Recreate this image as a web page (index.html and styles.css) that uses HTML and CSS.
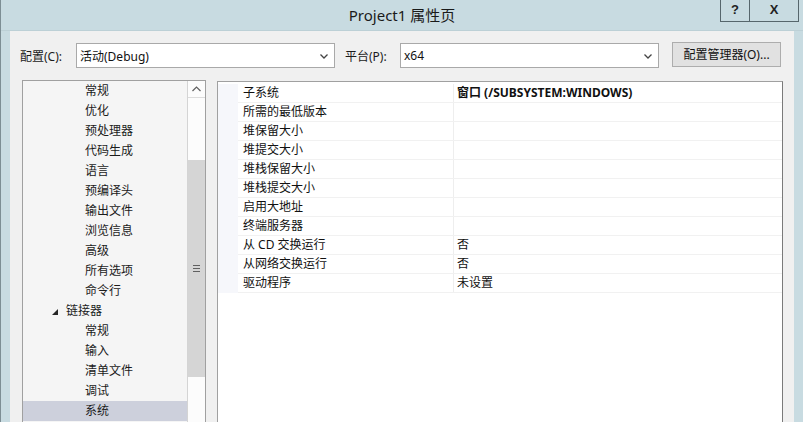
FILE: index.html
```html
<!doctype html>
<html>
<head>
  <meta charset="utf-8" />
  <title>Project1 属性页</title>
  <link rel="stylesheet" href="styles.css">
</head>
<body>
  <div class="window">
    <div class="titlebar">
      <div></div>
      <div class="title">Project1 属性页</div>
      <div class="caption-buttons">
        <span class="cap-btn help">?</span>
        <span class="cap-btn close">X</span>
      </div>
    </div>

    <div class="client">
      <div class="toolbar">
        <span class="field-label">配置(C):</span>
        <div class="combo">
          <span>活动(Debug)</span>
          <svg class="combo-arrow" width="8" height="5" viewBox="0 0 8 5"><polyline points="0.5,0.5 4,4 7.5,0.5" fill="none" stroke="#444" stroke-width="1.3"/></svg>
        </div>
        <span class="field-label platform">平台(P):</span>
        <div class="combo">
          <span>x64</span>
          <svg class="combo-arrow" width="8" height="5" viewBox="0 0 8 5"><polyline points="0.5,0.5 4,4 7.5,0.5" fill="none" stroke="#444" stroke-width="1.3"/></svg>
        </div>
        <button class="btn">配置管理器(O)...</button>
      </div>

      <div class="panes">
        <div class="tree">
          <ul class="tree-list">
            <li class="child">常规</li>
            <li class="child">优化</li>
            <li class="child">预处理器</li>
            <li class="child">代码生成</li>
            <li class="child">语言</li>
            <li class="child">预编译头</li>
            <li class="child">输出文件</li>
            <li class="child">浏览信息</li>
            <li class="child">高级</li>
            <li class="child">所有选项</li>
            <li class="child">命令行</li>
            <li class="parent"><span class="expander"></span>链接器</li>
            <li class="child">常规</li>
            <li class="child">输入</li>
            <li class="child">清单文件</li>
            <li class="child">调试</li>
            <li class="child selected">系统</li>
          </ul>
          <div class="vscroll">
            <div class="scroll-up">
              <svg width="9" height="6" viewBox="0 0 9 6"><polyline points="0.5,5 4.5,1 8.5,5" fill="none" stroke="#606060" stroke-width="1.2"/></svg>
            </div>
            <div class="scroll-track top"></div>
            <div class="scroll-thumb">
              <svg width="7" height="7" viewBox="0 0 7 7"><path d="M0 0.5h7M0 3.5h7M0 6.5h7" stroke="#606060" stroke-width="1"/></svg>
            </div>
            <div class="scroll-track"></div>
          </div>
        </div>

        <div class="grid">
          <table class="props">
            <tr><td class="gutter"></td><td class="name">子系统</td><td class="value bold">窗口 (/SUBSYSTEM:WINDOWS)</td></tr>
            <tr><td class="gutter"></td><td class="name">所需的最低版本</td><td class="value"></td></tr>
            <tr><td class="gutter"></td><td class="name">堆保留大小</td><td class="value"></td></tr>
            <tr><td class="gutter"></td><td class="name">堆提交大小</td><td class="value"></td></tr>
            <tr><td class="gutter"></td><td class="name">堆栈保留大小</td><td class="value"></td></tr>
            <tr><td class="gutter"></td><td class="name">堆栈提交大小</td><td class="value"></td></tr>
            <tr><td class="gutter"></td><td class="name">启用大地址</td><td class="value"></td></tr>
            <tr><td class="gutter"></td><td class="name">终端服务器</td><td class="value"></td></tr>
            <tr><td class="gutter"></td><td class="name">从 CD 交换运行</td><td class="value">否</td></tr>
            <tr><td class="gutter"></td><td class="name">从网络交换运行</td><td class="value">否</td></tr>
            <tr><td class="gutter"></td><td class="name">驱动程序</td><td class="value">未设置</td></tr>
          </table>
        </div>
      </div>
    </div>
  </div>
</body>
</html>
```

FILE: styles.css
```css
html, body {
  margin: 0;
  padding: 0;
}
body {
  width: 803px;
  height: 422px;
  overflow: hidden;
  background: #c8dbe1;
  font-family: "Noto Sans", "Noto Sans CJK SC", sans-serif;
  font-size: 12px;
  color: #1b1b1b;
}
.window {
  height: 422px;
  border-left: 1px solid #7d8e94;
  box-sizing: border-box;
  display: flex;
  flex-direction: column;
  overflow: hidden;
}
.titlebar {
  height: 31px;
  flex: none;
  display: grid;
  grid-template-columns: 1fr auto 1fr;
  border-bottom: 1px solid #bcd0d6;
  box-sizing: border-box;
}
.title {
  font-size: 15px;
  line-height: 30px;
  color: #1a1a1a;
}
.caption-buttons {
  justify-self: end;
  align-self: start;
  display: flex;
  margin-right: 4px;
}
.cap-btn {
  height: 21px;
  line-height: 20px;
  text-align: center;
  font-family: "Liberation Sans", sans-serif;
  font-weight: bold;
  font-size: 13px;
  color: #222;
  border: 1px solid #56666c;
  border-top: none;
}
.cap-btn.help {
  width: 28px;
}
.cap-btn.close {
  width: 48px;
  border-left: none;
}

.client {
  flex: 1;
  margin: 0 9px 0 9px;
  background: #f0f0f0;
  overflow: hidden;
}
.toolbar {
  display: flex;
  align-items: center;
  height: 26px;
  margin-top: 11px;
  padding-left: 10px;
}
.field-label {
  width: 56px;
  padding-top: 1px;
  color: #1b1b1b;
}
.field-label.platform {
  width: 55px;
  margin-left: 10px;
}
.combo {
  width: 259px;
  height: 25px;
  box-sizing: border-box;
  background: #fff;
  border: 1px solid #a9a9a9;
  display: flex;
  align-items: center;
  justify-content: space-between;
  padding: 1px 6px 0 3px;
  color: #111;
}
.combo-arrow {
  margin-top: 1px;
}
.btn {
  margin-left: 13px;
  width: 109px;
  height: 25px;
  margin-top: -2px;
  background: #e1e1e1;
  border: 1px solid #adadad;
  font-family: "Noto Sans", "Noto Sans CJK SC", sans-serif;
  font-size: 12px;
  color: #111;
  padding: 0;
}

.panes {
  display: flex;
  margin-top: 12px;
  padding-left: 12px;
  gap: 11px;
}
.tree {
  width: 184px;
  height: 360px;
  box-sizing: border-box;
  border: 1px solid #a0a0a0;
  background: #f5f5f5;
  display: flex;
}
.tree-list {
  list-style: none;
  margin: 0;
  padding: 0;
  flex: 1;
}
.tree-list li {
  height: 20px;
  line-height: 20px;
  white-space: nowrap;
}
.tree-list li.child {
  padding-left: 62px;
}
.tree-list li.parent {
  padding-left: 29px;
  display: flex;
  align-items: center;
}
.expander {
  width: 0;
  height: 0;
  border-left: 6px solid transparent;
  border-bottom: 6px solid #262626;
  margin-right: 8px;
  margin-top: 1px;
}
.tree-list li.selected {
  background: #cdd0dc;
}
.vscroll {
  width: 17px;
  border-left: 1px solid #d4d4d4;
  background: #fcfcfc;
  display: flex;
  flex-direction: column;
}
.scroll-up {
  height: 16px;
  border-bottom: 1px solid #dcdcdc;
  display: flex;
  align-items: center;
  justify-content: center;
}
.scroll-track.top {
  height: 65px;
}
.scroll-thumb {
  height: 217px;
  background: #d5d5d5;
  display: flex;
  align-items: center;
  justify-content: center;
}
.scroll-track {
  flex: 1;
}

.grid {
  width: 566px;
  height: 360px;
  margin-top: 1px;
  box-sizing: border-box;
  border: 1px solid #a0a0a0;
  border-right-color: #7a7a7a;
  background: #fff;
}
.props {
  border-collapse: collapse;
  width: 100%;
  margin-top: 2px;
  color: #111;
}
.props td {
  height: 18px;
  padding: 0;
  line-height: 18px;
  border-bottom: 1px solid #f1f1f1;
  white-space: nowrap;
}
.props .gutter {
  width: 20px;
  background: #f6f7fb;
  border-bottom-color: #f6f7fb;
}
.props .name {
  width: 210px;
  padding-left: 5px;
}
.props .value {
  padding-left: 3px;
  border-left: 1px solid #eeeeee;
}
.props .bold {
  font-weight: bold;
}
```
